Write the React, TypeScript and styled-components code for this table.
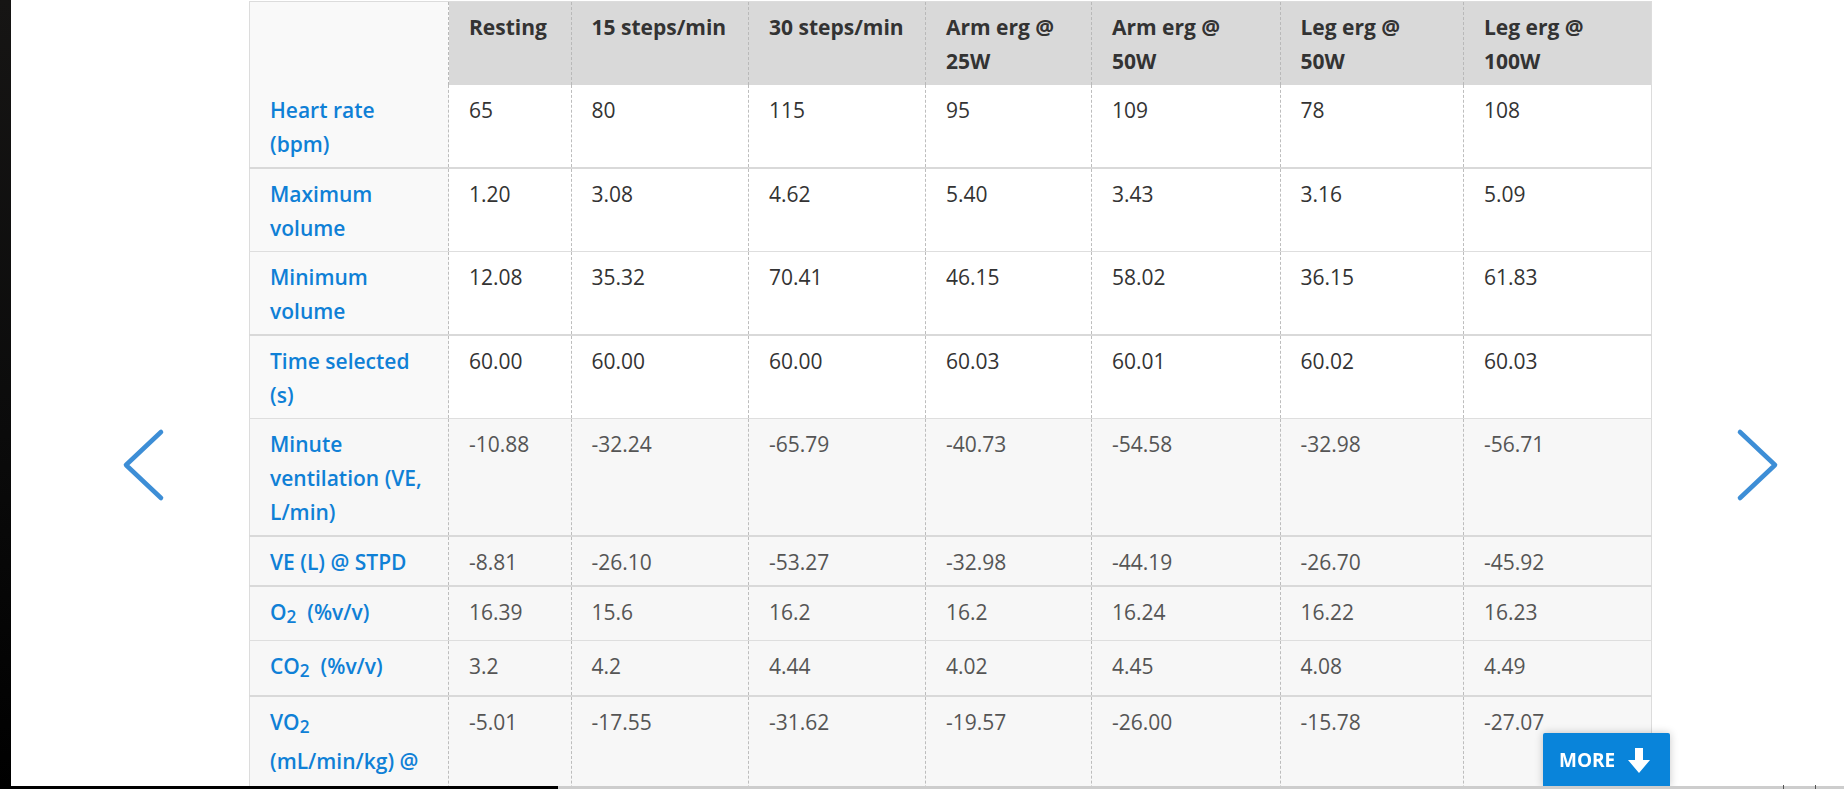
import React from 'react';
import styled, { createGlobalStyle } from 'styled-components';

const GlobalStyle = createGlobalStyle`
  html, body {
    margin: 0;
    height: 100%;
    overflow: hidden;
    background: #fff;
    font-family: "Open Sans", "Liberation Sans", sans-serif;
  }
`;

// column widths taken from the reference, first one is the label column
const colWidths = [199, 122.5, 177.5, 177, 166, 188.5, 183.5, 188];

const headers = [
    'Resting',
    '15 steps/min',
    '30 steps/min',
    'Arm erg @ 25W',
    'Arm erg @ 50W',
    'Leg erg @ 50W',
    'Leg erg @ 100W',
];

interface IRow {
    label: React.ReactNode,
    values: string[],
    shaded?: boolean,
    thickTop?: boolean,
}

const rows: IRow[] = [
    { label: 'Heart rate (bpm)', values: ['65', '80', '115', '95', '109', '78', '108'] },
    { label: 'Maximum volume', values: ['1.20', '3.08', '4.62', '5.40', '3.43', '3.16', '5.09'], thickTop: true },
    { label: 'Minimum volume', values: ['12.08', '35.32', '70.41', '46.15', '58.02', '36.15', '61.83'] },
    { label: 'Time selected (s)', values: ['60.00', '60.00', '60.00', '60.03', '60.01', '60.02', '60.03'], thickTop: true },
    {
        label: 'Minute ventilation (VE, L/min)',
        values: ['-10.88', '-32.24', '-65.79', '-40.73', '-54.58', '-32.98', '-56.71'],
        shaded: true,
    },
    {
        label: 'VE (L) @ STPD',
        values: ['-8.81', '-26.10', '-53.27', '-32.98', '-44.19', '-26.70', '-45.92'],
        shaded: true,
        thickTop: true,
    },
    {
        label: <>O<Sub>2</Sub>&nbsp; (%v/v)</>,
        values: ['16.39', '15.6', '16.2', '16.2', '16.24', '16.22', '16.23'],
        shaded: true,
        thickTop: true,
    },
    {
        label: <>CO<Sub>2</Sub>&nbsp; (%v/v)</>,
        values: ['3.2', '4.2', '4.44', '4.02', '4.45', '4.08', '4.49'],
        shaded: true,
    },
    {
        label: <>VO<Sub>2</Sub> (mL/min/kg) @ STPD</>,
        values: ['-5.01', '-17.55', '-31.62', '-19.57', '-26.00', '-15.78', '-27.07'],
        shaded: true,
        thickTop: true,
    },
];

function Sub({ children }: { children: React.ReactNode }) {
    return <SubText>{children}</SubText>;
}

const SubText = styled.sub`
    font-size: 0.82em;
    vertical-align: -0.2em;
`;

const Page = styled.div`
    display: flex;
    height: 100vh;
`;

const DarkEdge = styled.div`
    width: 11px;
    flex: 0 0 11px;
    background: linear-gradient(#161514, #0b0b0b 55%, #000);
`;

const Stage = styled.div`
    flex: 1;
    display: flex;
    align-items: flex-start;
    padding-top: 1px;
`;

const NavSide = styled.div<{ $side: 'left' | 'right' }>`
    flex: ${(p) => (p.$side === 'left' ? '0 0 238px' : '1')};
    padding-top: 427px;
    padding-left: ${(p) => (p.$side === 'left' ? '111px' : '83px')};
    box-sizing: border-box;
`;

const ChevronSvg = styled.svg`
    display: block;
    width: 44px;
    height: 74px;
    cursor: pointer;
`;

function Chevron({ dir }: { dir: 'left' | 'right' }) {
    const points = dir === 'left' ? '39,4 4,37 39,70' : '5,4 40,37 5,70';
    return (
        <ChevronSvg viewBox="0 0 44 74">
            <polyline
                points={points}
                fill="none"
                stroke="#3d8ed6"
                strokeWidth="4.6"
                strokeLinecap="round"
                strokeLinejoin="round"
            />
        </ChevronSvg>
    );
}

const DataTable = styled.table`
    width: 1402px;
    flex: 0 0 1402px;
    table-layout: fixed;
    border-collapse: collapse;
    border: 1px solid #dcdcdc;
    font-size: 21px;
    line-height: 34px;
`;

const HeadCell = styled.th<{ $blank?: boolean }>`
    background: ${(p) => (p.$blank ? '#f9f9f9' : '#d9d9d9')};
    color: #333;
    font-weight: 700;
    text-align: left;
    vertical-align: top;
    padding: 8px 20px 7px;
    height: 68px;
    border-left: 1px dashed #b9b9b9;
    &:first-child {
        border-left: none;
    }
`;

const BodyRow = styled.tr<{ $shaded?: boolean, $thickTop?: boolean }>`
    background: ${(p) => (p.$shaded ? '#f7f7f7' : '#fff')};
    color: ${(p) => (p.$shaded ? '#555' : '#333')};
    border-top: ${(p) => (p.$thickTop ? '2px solid #d9d9d9' : '1px solid #dedede')};
    &:first-child {
        border-top: none;
    }
`;

const LabelCell = styled.td<{ $shaded?: boolean }>`
    background: ${(p) => (p.$shaded ? '#f7f7f7' : '#f9f9f9')};
    color: #0f80d6;
    font-weight: 600;
    vertical-align: top;
    padding: 8px 20px 6px;
`;

const ValueCell = styled.td`
    vertical-align: top;
    padding: 8px 20px 6px;
    border-left: 1px dashed #bdbdbd;
`;

const MoreButton = styled.button`
    position: fixed;
    left: 1543px;
    top: 733px;
    width: 127px;
    height: 54px;
    display: flex;
    align-items: center;
    gap: 13px;
    padding: 0 16px;
    border: none;
    border-radius: 2px 2px 0 0;
    background: #0984da;
    color: #fff;
    font-family: "Open Sans", "Liberation Sans", sans-serif;
    font-size: 19px;
    font-weight: 700;
    box-shadow: 0 0 9px rgba(0, 0, 0, 0.22);
    cursor: pointer;
`;

const ArrowSvg = styled.svg`
    display: block;
    width: 22px;
    height: 25px;
`;

const BottomBar = styled.div`
    position: fixed;
    left: 0;
    right: 0;
    bottom: 0;
    height: 3px;
    display: flex;
    background: #cdcdcd;
`;

const BarFill = styled.div`
    width: 558px;
    background: #000;
`;

const BarTick = styled.span<{ $x: number }>`
    position: absolute;
    left: ${(p) => p.$x}px;
    bottom: 0;
    width: 1px;
    height: 4px;
    background: #555;
`;

export default function App() {
    return (
        <>
            <GlobalStyle />
            <Page>
                <DarkEdge />
                <Stage>
                    <NavSide $side="left">
                        <Chevron dir="left" />
                    </NavSide>
                    <DataTable>
                        <colgroup>
                            {colWidths.map((w, i) => (
                                <col key={i} style={{ width: w }} />
                            ))}
                        </colgroup>
                        <thead>
                            <tr>
                                <HeadCell $blank />
                                {headers.map((h) => (
                                    <HeadCell key={h}>{h}</HeadCell>
                                ))}
                            </tr>
                        </thead>
                        <tbody>
                            {rows.map((r, i) => (
                                <BodyRow key={i} $shaded={r.shaded} $thickTop={r.thickTop}>
                                    <LabelCell $shaded={r.shaded}>{r.label}</LabelCell>
                                    {r.values.map((v, j) => (
                                        <ValueCell key={j}>{v}</ValueCell>
                                    ))}
                                </BodyRow>
                            ))}
                        </tbody>
                    </DataTable>
                    <NavSide $side="right">
                        <Chevron dir="right" />
                    </NavSide>
                </Stage>
            </Page>
            <MoreButton>
                MORE
                <ArrowSvg viewBox="0 0 22 25">
                    <path d="M7 0h8v12h7L11 25 0 12h7z" fill="#fff" />
                </ArrowSvg>
            </MoreButton>
            <BottomBar>
                <BarFill />
                <BarTick $x={1783} />
                <BarTick $x={1815} />
            </BottomBar>
        </>
    );
}
